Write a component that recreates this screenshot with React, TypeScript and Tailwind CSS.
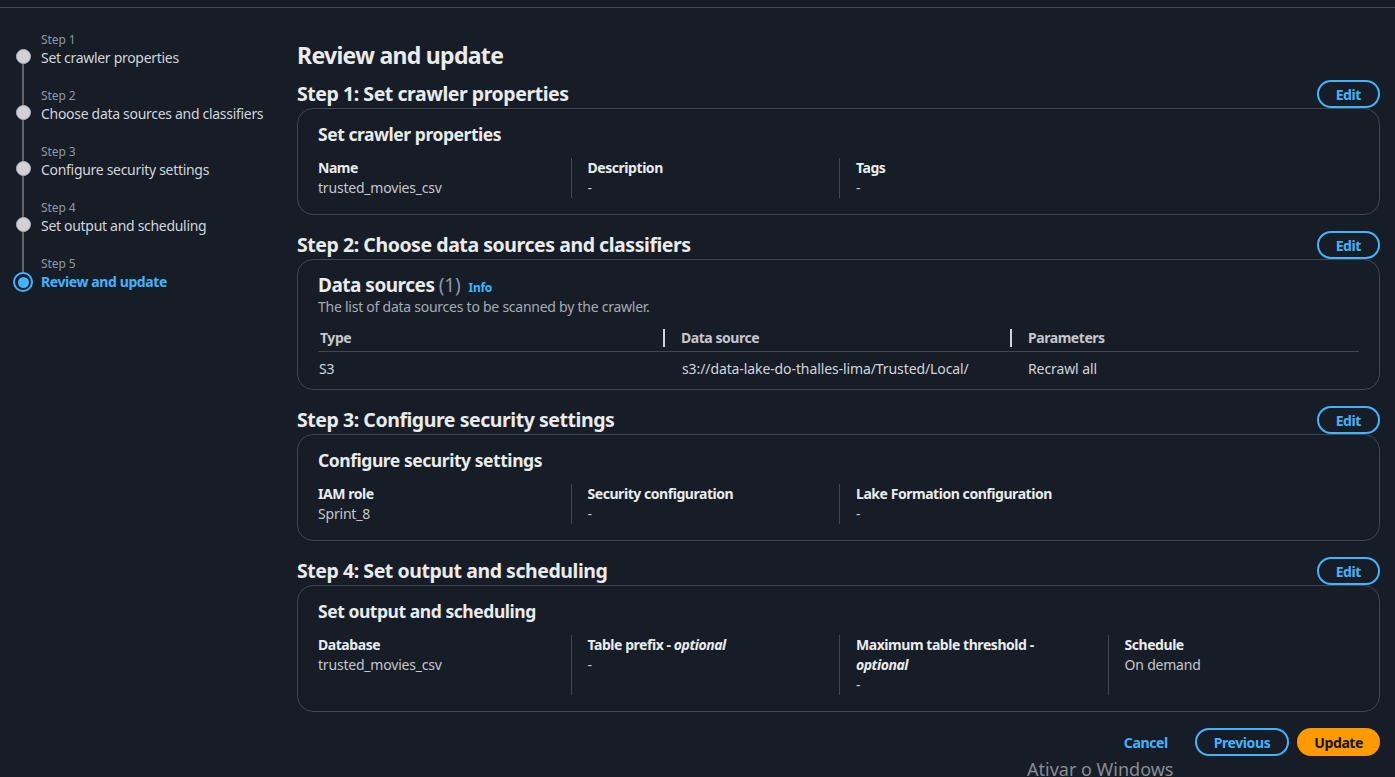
import React from 'react'

const steps = [
  { label: 'Step 1', name: 'Set crawler properties' },
  { label: 'Step 2', name: 'Choose data sources and classifiers' },
  { label: 'Step 3', name: 'Configure security settings' },
  { label: 'Step 4', name: 'Set output and scheduling' },
  { label: 'Step 5', name: 'Review and update', active: true },
]

function Sidebar(): React.JSX.Element {
  return (
    <nav className="w-[297px] shrink-0 pl-[13px] pt-[24px]">
      {steps.map((s, i) => {
        const first = i === 0
        const last = i === steps.length - 1
        return (
          <div key={s.label} className="flex gap-2">
            <div className="flex w-5 shrink-0 flex-col items-center">
              <div className={`w-[2px] ${s.active ? 'h-[16px]' : 'h-[17px]'} ${first ? '' : 'bg-[#5b6573]'}`} />
              {s.active ? (
                <span className="flex h-5 w-5 items-center justify-center rounded-full border-2 border-[#42b4ff]">
                  <span className="h-[11px] w-[11px] rounded-full bg-[#42b4ff]" />
                </span>
              ) : (
                <span className="h-[15px] w-[15px] rounded-full border border-[#b4b4bb] bg-[#d1d1d6]" />
              )}
              {!last && <div className="w-[2px] flex-1 bg-[#5b6573]" />}
            </div>
            <div className={last ? '' : 'pb-5'}>
              <div className="text-[12px] leading-4 tracking-[-0.1px] text-[#8d99a8]">{s.label}</div>
              <div
                className={`text-[14px] leading-5 ${
                  s.active ? 'font-bold tracking-[-0.4px] text-[#42b4ff]' : 'tracking-[-0.3px] text-[#d1d5db]'
                }`}
              >
                {s.name}
              </div>
            </div>
          </div>
        )
      })}
    </nav>
  )
}

function EditButton(): React.JSX.Element {
  return (
    <button className="flex h-[28px] items-center rounded-full border-2 border-[#42b4ff] px-[17px] text-[14px] font-bold tracking-[-0.4px] text-[#42b4ff]">
      Edit
    </button>
  )
}

function SectionHeader({ title, first }: { title: string; first?: boolean }): React.JSX.Element {
  return (
    <div className={`flex h-[28px] items-center justify-between ${first ? 'mt-[10px]' : 'mt-[16px]'}`}>
      <h2 className="text-[19.5px] font-bold leading-6 tracking-[-0.45px] text-[#e9ebed]">{title}</h2>
      <EditButton />
    </div>
  )
}

type Field = { label: React.ReactNode; value: React.ReactNode }

function KeyValues({ fields }: { fields: Field[] }): React.JSX.Element {
  return (
    <div className="grid grid-cols-4">
      {fields.map((f, i) => (
        <div key={i} className={`px-4 ${i > 0 ? 'border-l border-[#424650]' : ''}`}>
          <div className="text-[14px] font-bold leading-5 tracking-[-0.45px] text-[#e9ebed]">{f.label}</div>
          <div className="text-[14px] leading-5 tracking-[-0.2px] text-[#c6c6cd]">{f.value}</div>
        </div>
      ))}
    </div>
  )
}

function Card({ title, fields }: { title: string; fields: Field[] }): React.JSX.Element {
  return (
    <div className="rounded-2xl border border-[#424650] pb-[16px] pl-[4px] pr-[3px] pt-[14px]">
      <h3 className="px-4 text-[17.5px] font-bold leading-[22px] tracking-[-0.45px] text-[#e9ebed]">{title}</h3>
      <div className="mt-[13px]">
        <KeyValues fields={fields} />
      </div>
    </div>
  )
}

function Optional({ text, wrap }: { text: string; wrap?: boolean }): React.JSX.Element {
  return (
    <>
      {text} -{wrap ? <br /> : ' '}
      <i className="font-bold">optional</i>
    </>
  )
}

function DataSourcesCard(): React.JSX.Element {
  return (
    <div className="rounded-2xl border border-[#424650] px-[20px] pb-[5px] pt-[13px]">
      <div className="flex items-baseline gap-2">
        <h3 className="text-[19px] font-bold leading-6 tracking-[-0.5px] text-[#e9ebed]">
          Data sources <span className="font-normal tracking-[-0.2px] text-[#8d99a8]">(1)</span>
        </h3>
        <span className="text-[12px] font-bold tracking-[-0.3px] text-[#42b4ff]">Info</span>
      </div>
      <p className="text-[14px] leading-5 tracking-[-0.25px] text-[#a4abb5]">
        The list of data sources to be scanned by the crawler.
      </p>
      <div className="mt-[7px]">
        <div className="grid h-[28px] grid-cols-3 items-center border-b border-[#424650] text-[14px] font-bold tracking-[-0.45px] text-[#c6c6cd]">
          <div className="flex items-center justify-between pl-[2px]">
            <span>Type</span>
            <span className="h-[18px] w-[2px] bg-[#d1d5db]" />
          </div>
          <div className="flex items-center justify-between pl-[16px]">
            <span>Data source</span>
            <span className="h-[18px] w-[2px] bg-[#d1d5db]" />
          </div>
          <div className="pl-[16px]">
            <span>Parameters</span>
          </div>
        </div>
        <div className="grid h-[32px] grid-cols-3 items-center text-[14px] tracking-[-0.1px] text-[#d1d5db]">
          <div className="pl-[1px]">S3</div>
          <div className="pl-[17px]">s3://data-lake-do-thalles-lima/Trusted/Local/</div>
          <div className="pl-[16px]">Recrawl all</div>
        </div>
      </div>
    </div>
  )
}

export default function App(): React.JSX.Element {
  return (
    <div
      className="relative h-[777px] overflow-hidden bg-[#161d26]"
      style={{ fontFamily: '"Noto Sans", "Open Sans", Arial, sans-serif' }}
    >
      <div className="h-[7px]" />
      <div className="h-px bg-[#414750]" />
      <div className="flex">
        <Sidebar />
        <main className="w-[1083px] shrink-0 pt-[32px]">
          <h1 className="text-[23px] font-bold leading-[30px] tracking-[-0.7px] text-[#e9ebed]">Review and update</h1>

          <SectionHeader title="Step 1: Set crawler properties" first />
          <Card
            title="Set crawler properties"
            fields={[
              { label: 'Name', value: 'trusted_movies_csv' },
              { label: 'Description', value: '-' },
              { label: 'Tags', value: '-' },
            ]}
          />

          <SectionHeader title="Step 2: Choose data sources and classifiers" />
          <DataSourcesCard />

          <SectionHeader title="Step 3: Configure security settings" />
          <Card
            title="Configure security settings"
            fields={[
              { label: 'IAM role', value: 'Sprint_8' },
              { label: 'Security configuration', value: '-' },
              { label: 'Lake Formation configuration', value: '-' },
            ]}
          />

          <SectionHeader title="Step 4: Set output and scheduling" />
          <Card
            title="Set output and scheduling"
            fields={[
              { label: 'Database', value: 'trusted_movies_csv' },
              { label: <Optional text="Table prefix" />, value: '-' },
              { label: <Optional text="Maximum table threshold" wrap />, value: '-' },
              { label: 'Schedule', value: 'On demand' },
            ]}
          />

          <div className="mt-[16px] flex items-center justify-end gap-2 text-[14px] font-bold tracking-[-0.4px]">
            <button className="flex h-[28px] items-center px-[19px] text-[#42b4ff]">Cancel</button>
            <button className="flex h-[28px] items-center rounded-full border-2 border-[#42b4ff] px-[17px] text-[#42b4ff]">
              Previous
            </button>
            <button className="flex h-[28px] items-center rounded-full bg-[#ff9900] px-[17px] text-[#0f141a]">
              Update
            </button>
          </div>
        </main>
      </div>
      <div className="absolute left-[1027px] top-[757px] text-[18px] leading-6 text-[#8a8d92]">Ativar o Windows</div>
    </div>
  )
}
